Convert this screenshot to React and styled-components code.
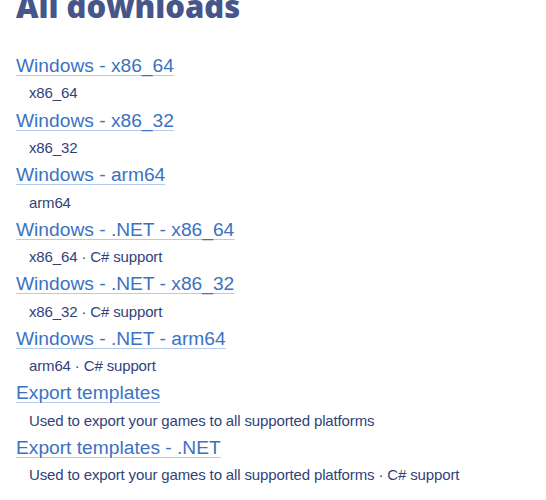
import React from 'react';
import styled, { createGlobalStyle } from 'styled-components';

const downloads = [
  { title: 'Windows - x86_64', note: 'x86_64' },
  { title: 'Windows - x86_32', note: 'x86_32' },
  { title: 'Windows - arm64', note: 'arm64' },
  { title: 'Windows - .NET - x86_64', note: 'x86_64 · C# support' },
  { title: 'Windows - .NET - x86_32', note: 'x86_32 · C# support' },
  { title: 'Windows - .NET - arm64', note: 'arm64 · C# support' },
  { title: 'Export templates', note: 'Used to export your games to all supported platforms' },
  {
    title: 'Export templates - .NET',
    note: 'Used to export your games to all supported platforms · C# support',
  },
];

const GlobalStyle = createGlobalStyle`
  html, body {
    margin: 0;
    padding: 0;
    background: #ffffff;
    overflow: hidden;
  }
  body {
    font-family: "Liberation Sans", Arial, sans-serif;
  }
`;

const Page = styled.div`
  padding: 0 16px;
`;

const Heading = styled.h2`
  margin: -14px 0 0;
  font-family: "Open Sans", "Liberation Sans", sans-serif;
  font-weight: 800;
  font-size: 31px;
  line-height: 40px;
  color: #46568a;
`;

const List = styled.ul`
  list-style: none;
  margin: 26px 0 0;
  padding: 0;
  display: flex;
  flex-direction: column;
  gap: 1.2px;
`;

const Item = styled.li`
  display: flex;
  flex-direction: column;
  align-items: flex-start;
`;

const Link = styled.a`
  font-size: 19.2px;
  line-height: 28px;
  color: #3b72c2;
  text-decoration: underline;
  text-decoration-color: #b4cbed;
  text-decoration-thickness: 1px;
  text-underline-offset: 3px;
  cursor: pointer;
`;

const Note = styled.div`
  padding: 1.4px 0 0 13px;
  font-size: 15px;
  letter-spacing: -0.14px;
  line-height: 24px;
  color: #31427a;
`;

export default function App() {
  return (
    <Page>
      <GlobalStyle />
      <Heading>All downloads</Heading>
      <List>
        {downloads.map((d) => (
          <Item key={d.title}>
            <Link href="#">{d.title}</Link>
            <Note>{d.note}</Note>
          </Item>
        ))}
      </List>
    </Page>
  );
}
